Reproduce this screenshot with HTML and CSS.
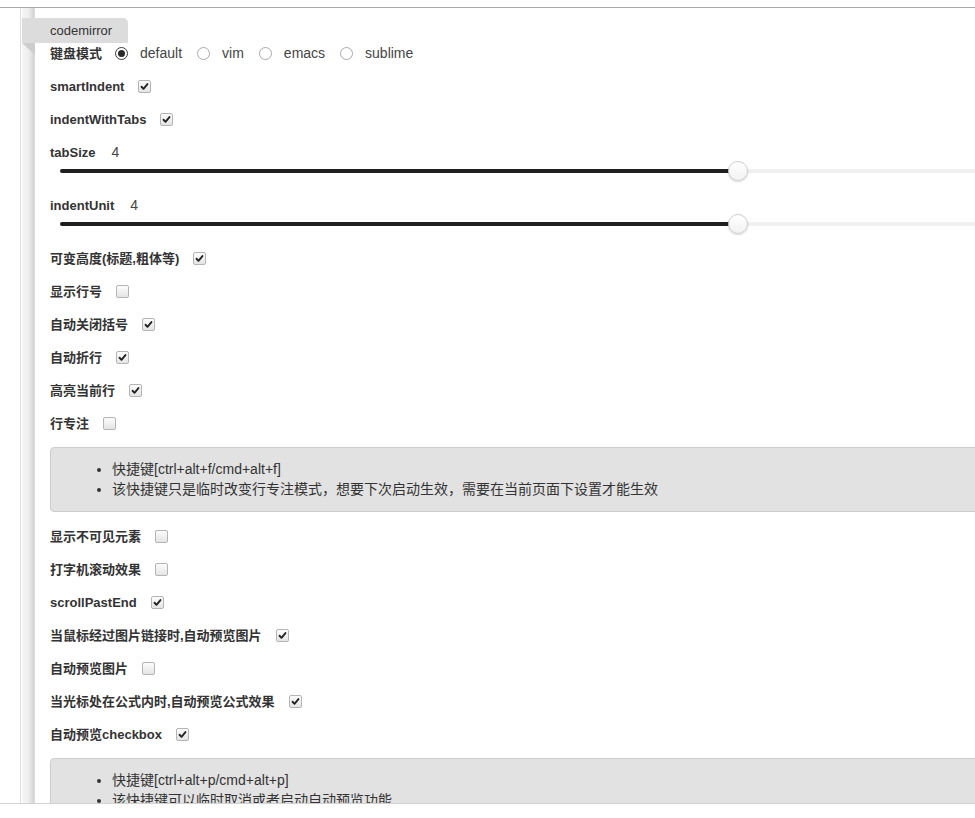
FILE: index.html
```html
<!DOCTYPE html>
<html lang="zh-CN">
<head>
<meta charset="utf-8">
<title>codemirror</title>
<link rel="stylesheet" href="styles.css">
</head>
<body>
<div class="frame">
  <div class="side"></div>
  <div class="content">
    <div class="tab">codemirror</div>

    <div class="radio-row">
      <span class="label">键盘模式</span>
      <span class="radio checked"></span><span class="opt">default</span>
      <span class="radio"></span><span class="opt">vim</span>
      <span class="radio"></span><span class="opt">emacs</span>
      <span class="radio"></span><span class="opt">sublime</span>
    </div>

    <div class="row"><span class="label">smartIndent</span><span class="cb on"><svg viewBox="0 0 13 13"><path d="M3 6.8 L5.3 9.2 L10 3.6"/></svg></span></div>
    <div class="row"><span class="label">indentWithTabs</span><span class="cb on"><svg viewBox="0 0 13 13"><path d="M3 6.8 L5.3 9.2 L10 3.6"/></svg></span></div>

    <div class="slider-field">
      <div class="slider-label"><span class="label">tabSize</span><span class="value">4</span></div>
      <div class="slider"><div class="track"><div class="fill" style="width:60%"><span class="thumb"></span></div></div></div>
    </div>
    <div class="slider-field">
      <div class="slider-label"><span class="label">indentUnit</span><span class="value">4</span></div>
      <div class="slider"><div class="track"><div class="fill" style="width:60%"><span class="thumb"></span></div></div></div>
    </div>

    <div class="row"><span class="label">可变高度(标题,粗体等)</span><span class="cb on"><svg viewBox="0 0 13 13"><path d="M3 6.8 L5.3 9.2 L10 3.6"/></svg></span></div>
    <div class="row"><span class="label">显示行号</span><span class="cb"></span></div>
    <div class="row"><span class="label">自动关闭括号</span><span class="cb on"><svg viewBox="0 0 13 13"><path d="M3 6.8 L5.3 9.2 L10 3.6"/></svg></span></div>
    <div class="row"><span class="label">自动折行</span><span class="cb on"><svg viewBox="0 0 13 13"><path d="M3 6.8 L5.3 9.2 L10 3.6"/></svg></span></div>
    <div class="row"><span class="label">高亮当前行</span><span class="cb on"><svg viewBox="0 0 13 13"><path d="M3 6.8 L5.3 9.2 L10 3.6"/></svg></span></div>
    <div class="row"><span class="label">行专注</span><span class="cb"></span></div>

    <div class="note">
      <ul>
        <li>快捷键[ctrl+alt+f/cmd+alt+f]</li>
        <li>该快捷键只是临时改变行专注模式，想要下次启动生效，需要在当前页面下设置才能生效</li>
      </ul>
    </div>

    <div class="row"><span class="label">显示不可见元素</span><span class="cb"></span></div>
    <div class="row"><span class="label">打字机滚动效果</span><span class="cb"></span></div>
    <div class="row"><span class="label">scrollPastEnd</span><span class="cb on"><svg viewBox="0 0 13 13"><path d="M3 6.8 L5.3 9.2 L10 3.6"/></svg></span></div>
    <div class="row"><span class="label">当鼠标经过图片链接时,自动预览图片</span><span class="cb on"><svg viewBox="0 0 13 13"><path d="M3 6.8 L5.3 9.2 L10 3.6"/></svg></span></div>
    <div class="row"><span class="label">自动预览图片</span><span class="cb"></span></div>
    <div class="row"><span class="label">当光标处在公式内时,自动预览公式效果</span><span class="cb on"><svg viewBox="0 0 13 13"><path d="M3 6.8 L5.3 9.2 L10 3.6"/></svg></span></div>
    <div class="row"><span class="label">自动预览checkbox</span><span class="cb on"><svg viewBox="0 0 13 13"><path d="M3 6.8 L5.3 9.2 L10 3.6"/></svg></span></div>

    <div class="note">
      <ul>
        <li>快捷键[ctrl+alt+p/cmd+alt+p]</li>
        <li>该快捷键可以临时取消或者启动自动预览功能</li>
      </ul>
    </div>
  </div>
</div>
</body>
</html>
```

FILE: styles.css
```css
html, body {
  margin: 0;
  padding: 0;
  overflow: hidden;
  background: #fff;
}

body {
  width: 975px;
  height: 818px;
  font-family: "Liberation Sans", Arial, "Noto Sans CJK SC", sans-serif;
  color: #333;
}

.frame {
  margin-top: 7px;
  width: 1200px;
  height: 795px;
  border-top: 1px solid #a8a8a8;
  border-bottom: 1px solid #d2d2d2;
  display: flex;
  overflow: hidden;
}

.side {
  flex: none;
  width: 36px;
  background: linear-gradient(to right,
    #fff 0, #fff 20px,
    #dcdcdc 20px, #dcdcdc 21px,
    #fff 21px, #fff 22px,
    #f6f6f6 22px, #ececec 29px, #d3d3d3 34px,
    #e6e6e6 35px, #fff 35px);
}

.content {
  flex: none;
  width: 1164px;
  padding-left: 14px;
  padding-top: 10px;
  box-sizing: border-box;
}

.tab {
  position: relative;
  margin-left: -28px;
  width: 106px;
  height: 25px;
  line-height: 25px;
  padding-left: 28px;
  box-sizing: border-box;
  background: #dcdcdc;
  border-top-right-radius: 5px;
  font-size: 13px;
  color: #333;
}

.tab::after {
  content: "";
  position: absolute;
  left: 0;
  top: 25px;
  width: 0;
  height: 0;
  border-top: 12px solid #cdcdcd;
  border-left: 13px solid transparent;
}

.label {
  font-weight: bold;
  font-size: 13px;
  line-height: 17px;
  color: #333;
}

.radio-row {
  height: 20px;
  margin-bottom: 7px;
  display: flex;
  align-items: center;
}

.radio {
  flex: none;
  width: 13px;
  height: 13px;
  box-sizing: border-box;
  border: 1px solid #a9a9a9;
  border-radius: 50%;
  background: #fff;
  margin-left: 15px;
  position: relative;
}

.radio-row .label + .radio {
  margin-left: 13px;
}

.radio.checked {
  border-color: #3a3a3a;
}

.radio.checked::after {
  content: "";
  position: absolute;
  left: 2px;
  top: 2px;
  width: 7px;
  height: 7px;
  border-radius: 50%;
  background: #2a2a2a;
}

.opt {
  margin-left: 12px;
  font-size: 14px;
  line-height: 17px;
  color: #444;
}

.row {
  height: 33px;
  display: flex;
  align-items: center;
}

.cb {
  flex: none;
  width: 13px;
  height: 13px;
  box-sizing: border-box;
  margin-left: 14px;
  border: 1px solid #b4b4b4;
  border-radius: 2px;
  background: linear-gradient(#fcfcfc, #e4e4e4);
  display: flex;
}

.cb svg {
  width: 11px;
  height: 11px;
}

.cb path {
  fill: none;
  stroke: #222;
  stroke-width: 2.2;
  stroke-linecap: round;
  stroke-linejoin: round;
}

.slider-field {
  padding: 8px 0;
}

.slider-label {
  height: 17px;
  display: flex;
  align-items: center;
}

.value {
  margin-left: 16px;
  font-size: 14px;
  line-height: 17px;
  color: #444;
}

.slider {
  height: 20px;
  padding: 0 10px;
  display: flex;
  align-items: center;
}

.track {
  flex: 1;
  height: 4px;
  border-radius: 2px;
  background: #f0f0f0;
}

.fill {
  position: relative;
  height: 100%;
  background: #1f1f1f;
  border-radius: 2px 0 0 2px;
}

.thumb {
  position: absolute;
  right: -10px;
  top: -8px;
  width: 20px;
  height: 20px;
  box-sizing: border-box;
  border-radius: 50%;
  border: 1px solid #cfcfcf;
  background: linear-gradient(#ffffff, #f2f2f2);
  box-shadow: 0 1px 2px rgba(0, 0, 0, 0.18);
}

.note {
  margin: 7px 0 8px;
  background: #e2e2e2;
  border: 1px solid #cdcdcd;
  border-radius: 4px;
  padding: 11px 0 12px;
}

.note ul {
  margin: 0;
  padding-left: 61px;
}

.note li {
  font-size: 14px;
  line-height: 20px;
  color: #333;
}
```
